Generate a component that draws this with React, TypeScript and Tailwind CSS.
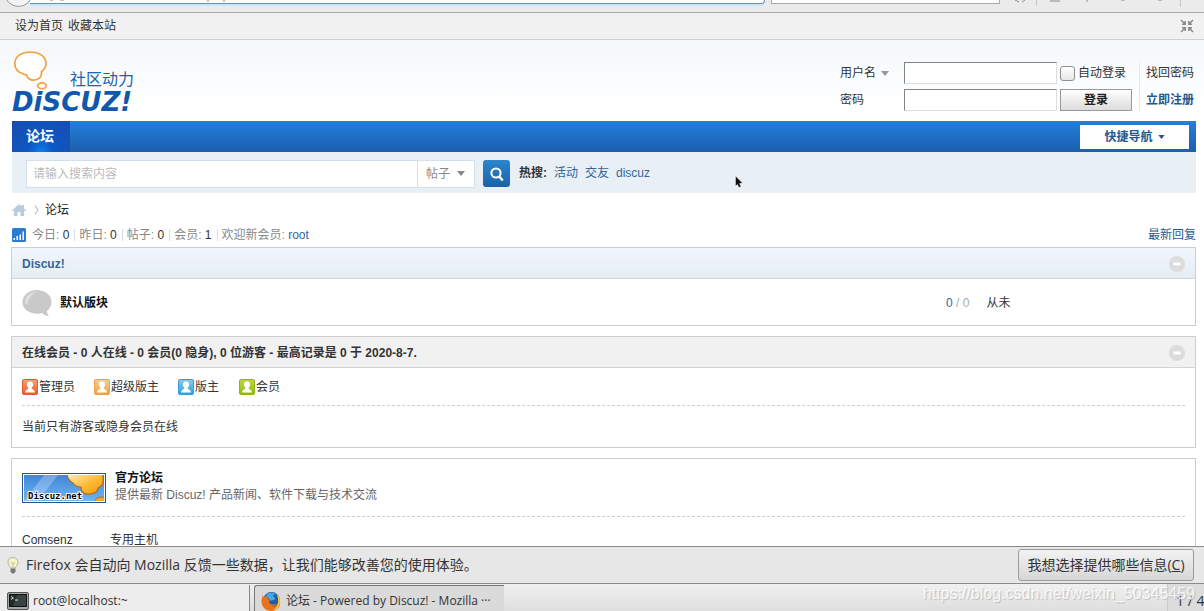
import type { ReactNode } from 'react';

const userGroups = [
  { name: '管理员', from: '#f9a27a', to: '#e9592b', width: 'w-[72px]' },
  { name: '超级版主', from: '#fbcf8c', to: '#ef9f45', width: 'w-[84px]' },
  { name: '版主', from: '#7fd0f5', to: '#2f9fe0', width: 'w-[61px]' },
  { name: '会员', from: '#bfdc35', to: '#8fb80f', width: 'w-[61px]' },
];

const stats = [
  { label: '今日', value: 0 },
  { label: '昨日', value: 0 },
  { label: '帖子', value: 0 },
  { label: '会员', value: 1 },
];

const hotWords = ['活动', '交友', 'discuz'];

function Caret({ className }: { className: string }) {
  return (
    <svg viewBox="0 0 8 5" className={className} aria-hidden="true">
      <path d="M0 0h8L4 5z" fill="currentColor" />
    </svg>
  );
}

function CollapseButton() {
  return (
    <button type="button" aria-label="收起/展开" className="size-4">
      <svg viewBox="0 0 16 16" className="size-4">
        <circle cx="8" cy="8" r="8" fill="#dcdcdc" />
        <rect x="4.5" y="6.5" width="7" height="3" rx="0.5" fill="#fff" />
      </svg>
    </button>
  );
}

function UserIcon({ id, from, to }: { id: string; from: string; to: string }) {
  return (
    <svg viewBox="0 0 16 16" className="size-4 shrink-0" aria-hidden="true">
      <defs>
        <linearGradient id={id} x1="0" y1="0" x2="0" y2="1">
          <stop offset="0" stopColor={from} />
          <stop offset="1" stopColor={to} />
        </linearGradient>
      </defs>
      <rect x="0.5" y="0.5" width="15" height="15" rx="1.5" fill={`url(#${id})`} stroke={to} />
      <path
        d="M8 2.6c2.2 0 3.200 1.300 3.100 3.200-.1 1.300-.7 2.200-1.400 2.900v1.200c1.400.4 3.100.8 3.300 3.600H3c.2-2.800 1.900-3.200 3.300-3.600V8.700C5.600 8 5 7.100 4.900 5.800 4.800 3.900 5.800 2.600 8 2.600z"
        fill="#fff"
      />
    </svg>
  );
}

function Logo() {
  return (
    <svg viewBox="0 0 130 66" className="h-[66px] w-[130px]" role="img" aria-label="Discuz! 社区动力">
      <g fill="#fff" stroke="#f0a23c" strokeWidth="1.7">
        <path d="M12.500 24.500C6 22.500 2.500 18.500 2.800 13 3.200 6 10 2 18 2c9 0 16 4.500 16 11.500 0 3.500-1.800 6-4.500 8 .8 5-2.800 8.700-8 8.700-3 0-6.500-2-7-5.500-.6-.2-1.300 0-2-.2z" />
        <ellipse cx="30" cy="35.800" rx="4.200" ry="2.900" />
      </g>
      <text x="58" y="35" fontSize="16" fill="#1c62b0" fontFamily="'Noto Sans CJK SC', sans-serif">社区动力</text>
      <text x="0" y="61" fontSize="26" fontWeight="700" fontStyle="italic" fill="#0f58ac" fontFamily="'DejaVu Sans', sans-serif">DiSCUZ!</text>
    </svg>
  );
}

function DiscuzBanner() {
  return (
    <svg viewBox="0 0 84 30" className="h-[30px] w-[84px] shrink-0" role="img" aria-label="Discuz.net">
      <defs>
        <linearGradient id="banner" x1="0" y1="0" x2="0" y2="1">
          <stop offset="0" stopColor="#3f86d8" />
          <stop offset="1" stopColor="#6db4f2" />
        </linearGradient>
        <linearGradient id="cloud" x1="0" y1="0" x2="1" y2="1">
          <stop offset="0" stopColor="#fff0c0" />
          <stop offset="0.6" stopColor="#fdb62c" />
          <stop offset="1" stopColor="#f59a10" />
        </linearGradient>
        <clipPath id="bannerClip"><rect x="2" y="2" width="80" height="26" /></clipPath>
      </defs>
      <rect width="84" height="30" fill="#27548c" />
      <rect x="1" y="1" width="82" height="28" fill="#fff" />
      <g clipPath="url(#bannerClip)">
        <rect x="2" y="2" width="80" height="26" fill="url(#banner)" />
        <path d="M22 2h14L16 28H2z" fill="#fff" opacity="0.25" />
        <path d="M45 0c0 4 2 8 6 10 2 3 5 4 8 4 0 5 4 8 9 7 5-.5 8-3 8-6 3-1 5-4 5-6V0z" fill="url(#cloud)" stroke="#b86a14" strokeWidth="1.2" />
        <ellipse cx="79" cy="27.500" rx="5.500" ry="3.500" fill="#fba620" stroke="#b86a14" />
      </g>
      <text x="6" y="26" fontSize="9" fontWeight="700" fontFamily="'DejaVu Sans Mono', monospace" fill="#000" stroke="#fff" strokeWidth="2" paintOrder="stroke">Discuz.net</text>
    </svg>
  );
}

// 浏览器地址栏的底边
function BrowserChrome() {
  return (
    <div className="relative flex h-[13px] shrink-0 items-start overflow-hidden border-b border-[#a9a9a9] bg-[#ebebeb] pl-[30px]">
      <div className="h-1 w-[735px] rounded-br-sm border-r border-b border-[#6a93bb] bg-white shadow-[0_2px_1px_#cbe5f8]" />
      <div className="ml-[6px] h-1 w-[229px] border-x border-b border-[#a9a9a9] bg-white" />
      <div className="absolute -top-[22px] left-1 size-[29px] rounded-full border border-[#999] bg-[#f4f4f4]" />
      <svg viewBox="0 0 1204 8" className="absolute top-0 left-0 h-2 w-[1204px]" aria-hidden="true">
        <path d="M50 0h3M60 0h4M208 0v2M224 0v2M1015 0l4 2M1025 0l-3 2M1050 1h10M1087 0v2M1121 0h4M1158 0h4" stroke="#8a8a8a" fill="none" />
        <path d="M1036.500 0v6M1180.500 0v7" stroke="#c4c4c4" />
      </svg>
    </div>
  );
}

function TopBar() {
  return (
    <div className="flex h-[27px] shrink-0 items-center gap-[5px] border-b border-[#cfcfcf] bg-[#f1f1f1] pr-[9px] pl-[15px]">
      <a href="#">设为首页</a>
      <a href="#">收藏本站</a>
      <button type="button" aria-label="切换到窄版" className="ml-auto size-4">
        <svg viewBox="0 0 16 16" className="size-4" fill="none" stroke="#8b8b8b" strokeWidth="1.5">
          <path d="M2 2l4 4M6.200 3v3.200H3M14 2l-4 4M9.800 3v3.200H13M2 14l4-4M6.200 13V9.800H3M14 14l-4-4M9.800 13V9.800H13" />
        </svg>
      </button>
    </div>
  );
}

function LoginForm() {
  const field = 'h-[22px] w-[153px] border border-t-[#848484] border-l-[#848484] border-r-[#ddd] border-b-[#ddd] bg-white px-1';
  return (
    <form className="mt-[22px] flex items-start pr-[2px]">
      <div className="grid grid-cols-[64px_153px_76px] items-center gap-y-[5px]">
        <div className="relative flex items-center">
          <select aria-label="登录方式" className="w-[52px] appearance-none bg-transparent outline-none">
            <option>用户名</option>
            <option>UID</option>
          </select>
          <Caret className="pointer-events-none absolute left-[41px] h-[5px] w-2 text-[#999]" />
        </div>
        <input type="text" aria-label="用户名" className={field} />
        <label className="flex items-center gap-[3px] pl-[3px] whitespace-nowrap">
          <input
            type="checkbox"
            className="size-[15px] shrink-0 appearance-none rounded-[3px] border border-[#8f8f8f] bg-linear-to-b from-white to-[#e6e6e6]"
          />
          自动登录
        </label>
        <label htmlFor="password">密码</label>
        <input id="password" type="password" className={field} />
        <button
          type="submit"
          className="ml-[3px] h-[22px] w-[72px] border border-[#999] bg-linear-to-b from-white to-[#dcdcdc] font-bold text-[#222]"
        >
          登录
        </button>
      </div>
      <div className="ml-[6px] flex flex-col gap-[9px] border-l border-[#e8e8e8] py-[2px] pl-[6px] whitespace-nowrap">
        <a href="#">找回密码</a>
        <a href="#" className="font-bold text-[#24598f]">立即注册</a>
      </div>
    </form>
  );
}

function SearchBar() {
  return (
    <form className="flex h-[41px] items-center bg-[#e8eff5] pt-[2px] pl-[14px]">
      <div className="flex h-7 border border-[#d3e1ec] bg-white">
        <input
          type="text"
          aria-label="搜索内容"
          placeholder="请输入搜索内容"
          className="w-[391px] border-r border-[#ddd] px-[6px] outline-none placeholder:text-[#bbb]"
        />
        <div className="relative flex items-center">
          <select aria-label="搜索类型" className="h-full w-[56px] appearance-none bg-transparent pl-2 text-[#888] outline-none">
            <option>帖子</option>
            <option>用户</option>
          </select>
          <Caret className="pointer-events-none absolute right-[9px] h-[5px] w-2 text-[#888]" />
        </div>
      </div>
      <button type="submit" aria-label="搜索" className="ml-2 flex size-[27px] items-center justify-center rounded-[3px] bg-linear-to-b from-[#2b86cb] to-[#1a62a8]">
        <svg viewBox="0 0 16 16" className="size-4" fill="none" stroke="#fff">
          <circle cx="7" cy="7" r="4.600" strokeWidth="2" />
          <path d="M10.200 10.500l3.600 4" strokeWidth="2.600" />
        </svg>
      </button>
      <div className="ml-[9px] flex gap-[7px] pb-[2px] text-[#336699]">
        <strong className="text-[#333]">热搜:</strong>
        {hotWords.map(word => (
          <a key={word} href="#">{word}</a>
        ))}
      </div>
    </form>
  );
}

function Breadcrumb() {
  return (
    <nav className="flex h-[29px] items-center pt-[5px]">
      <a href="#" aria-label="首页">
        <svg viewBox="0 0 14 12" className="h-3 w-[14px]" fill="#b9cddd">
          <path d="M7 0l2.500 2.300V1H12v3.600l2 2V7h-2v5H8.500V8h-3v4H2V7H0v-.4z" />
        </svg>
      </a>
      <svg viewBox="0 0 5 10" className="mr-[6px] ml-2 h-[10px] w-[5px]" fill="none" stroke="#aaa">
        <path d="M1 0.500l3 4.500-3 4.500" />
      </svg>
      <a href="#" className="text-[#222]">论坛</a>
    </nav>
  );
}

function StatsLine() {
  return (
    <div className="flex h-[25px] items-center text-[#888]">
      <svg viewBox="0 0 14 14" className="mr-[6px] size-[14px]" aria-hidden="true">
        <rect width="14" height="14" rx="1.5" fill="#2a7cd0" />
        <path d="M1.500 10h1.500v2H1.500zM4.500 8h1.500v4H4.500zM7.500 6.500H9V12H7.500zM10.500 3.500H12V12h-1.500z" fill="#fff" />
      </svg>
      {stats.map(item => (
        <span key={item.label} className="mr-1 border-r border-[#ddd] pr-[5px] leading-3">
          {item.label}: <span className="text-[#333]">{item.value}</span>
        </span>
      ))}
      <span>欢迎新会员: <a href="#" className="text-[#336699]">root</a></span>
      <a href="#" className="ml-auto text-[#24598f]">最新回复</a>
    </div>
  );
}

function PanelHeader({ children, className }: { children: ReactNode; className: string }) {
  return (
    <div className={`flex h-[31px] items-center justify-between border-b border-[#cdd4da] px-[10px] pt-[2px] ${className}`}>
      <h2 className="font-bold">{children}</h2>
      <CollapseButton />
    </div>
  );
}

function ForumPage() {
  return (
    <main className="min-h-0 flex-1 overflow-hidden bg-linear-to-b from-[#f4f8fb] to-[#ffffff] to-[70px]">
      <div className="mr-2 ml-3">
        <header className="flex h-[81px] justify-between">
          <div className="pt-[10px]"><Logo /></div>
          <LoginForm />
        </header>
        <nav className="flex h-[31px] items-center justify-between bg-linear-to-b from-[#2280dc] to-[#1c5fae] pr-[7px]">
          <a href="#" className="flex h-full w-[58px] items-center justify-center bg-[radial-gradient(ellipse_at_bottom,#0c80ee,#0d58c4_30%,#1a4bb0)] pr-[2px] pb-[2px] text-[14px] font-bold text-white">论坛</a>
          <button type="button" className="flex h-6 w-[109px] items-center justify-center gap-[5px] bg-white font-bold text-[#24598f]">
            快捷导航
            <Caret className="h-1 w-[7px]" />
          </button>
        </nav>
        <SearchBar />
        <Breadcrumb />
        <StatsLine />
      </div>

      <div className="mr-2 ml-[11px] flex flex-col gap-[10px]">
        <section className="border border-[#cdcdcd] bg-white">
          <PanelHeader className="bg-linear-to-b from-[#f1f6fc] to-[#e5edf3] text-[#336699]">Discuz!</PanelHeader>
          <div className="flex h-[46px] items-center pt-[2px] pl-[10px]">
            <svg viewBox="0 0 31 29" className="h-[29px] w-[31px] shrink-0" aria-hidden="true">
              <path d="M15 1c8 0 14.500 5 14.500 12 0 4-1.800 7-4.500 9 0 2 .8 3.500 2 5-3 0-5-1-7-3-1.500.5-3 .7-5 .7C7 24.700.500 20 .500 13S7 1 15 1z" fill="#c9c9c9" />
              <path d="M3 13C3 7 8 3 15 3c-4 1.500-8 5-9.500 12-.7 1-2.500 0-2.500-2z" fill="#dedede" />
            </svg>
            <h3 className="ml-[7px] font-bold text-[#111]">默认版块</h3>
            <div className="ml-auto flex w-[249px] gap-[17px]">
              <span className="text-[#aaa]"><span className="text-[#336699]">0</span> / 0</span>
              <span>从未</span>
            </div>
          </div>
        </section>

        <section className="border border-[#cdcdcd] bg-white">
          <PanelHeader className="bg-[#f1f1f1] text-[#333]">
            在线会员 - 0 人在线 - 0 会员(0 隐身), 0 位游客 - 最高记录是 0 于 2020-8-7.
          </PanelHeader>
          <div className="px-[10px]">
            <ul className="flex h-[38px] items-center border-b border-dashed border-[#cdcdcd] pt-px">
              {userGroups.map((group, i) => (
                <li key={group.name} className={`flex items-center gap-px whitespace-nowrap ${group.width}`}>
                  <UserIcon id={`group${i}`} from={group.from} to={group.to} />
                  {group.name}
                </li>
              ))}
            </ul>
            <p className="flex h-[41px] items-center">当前只有游客或隐身会员在线</p>
          </div>
        </section>

        <section className="border border-[#cdcdcd] bg-white px-[10px]">
          <div className="flex h-[58px] items-center gap-[9px] border-b border-dashed border-[#cdcdcd]">
            <DiscuzBanner />
            <div className="pb-[2px] leading-[17px]">
              <h3 className="font-bold text-[#111]">官方论坛</h3>
              <p className="text-[#666]">提供最新 Discuz! 产品新闻、软件下载与技术交流</p>
            </div>
          </div>
          <div className="flex h-[46px] items-center">
            <a href="#" className="w-[88px]">Comsenz</a>
            <a href="#">专用主机</a>
          </div>
        </section>
      </div>
    </main>
  );
}

function NoticeBar() {
  return (
    <div className="flex h-[38px] shrink-0 items-center border-y border-[#8a8a8a] bg-[#e7e7e7] pr-[10px] pl-[7px] text-[14px] text-[#333]">
      <svg viewBox="0 0 12 17" className="mr-[7px] h-[17px] w-3" aria-hidden="true">
        <path d="M6 .5c3 0 5 2 5 4.800C11 8 9 9 8.500 11h-5C3 9 1 8 1 5.300 1 2.500 3 .5 6 .5z" fill="#f5f3cf" stroke="#b5b5a0" />
        <path d="M4 5l2 2 2-2M6 7v4" stroke="#c4bf80" fill="none" />
        <path d="M3.500 11.500h5v3L7 16.500H5l-1.500-2z" fill="#777" />
      </svg>
      <p>Firefox 会自动向 Mozilla 反馈一些数据，让我们能够改善您的使用体验。</p>
      <button type="button" className="ml-auto h-8 w-[176px] rounded-[3px] border border-[#9b9b9b] bg-linear-to-b from-[#f3f3f3] to-[#d6d6d6] whitespace-nowrap">
        我想选择提供哪些信息(<u>C</u>)
      </button>
    </div>
  );
}

function Taskbar() {
  return (
    <footer className="relative flex h-[27px] shrink-0 items-end overflow-hidden bg-linear-to-b from-[#f0f0f0] to-[#dedede] text-[12px] text-[#333]">
      <button type="button" className="flex h-[26px] w-[250px] items-center gap-1 border-r border-[#888] bg-[#ededed] pt-[6px] pl-[7px]">
        <svg viewBox="0 0 22 18" className="h-[18px] w-[22px]" aria-hidden="true">
          <rect x="0.5" y="0.5" width="21" height="17" rx="1.5" fill="#a5a8a5" stroke="#555" />
          <rect x="2.5" y="2.5" width="17" height="12" fill="#1f2a2b" stroke="#111" />
          <path d="M4 4.500l2.500 1.500L4 7.500M8 8h3" stroke="#ddd" fill="none" />
          <path d="M10 3h9v11H6z" fill="#fff" opacity="0.12" />
        </svg>
        root@localhost:~
      </button>
      <button type="button" className="ml-1 flex h-[26px] w-[250px] items-center gap-[5px] rounded-tl-[3px] border-t border-l border-[#777] bg-[#dadada] pt-[5px] pl-[6px] whitespace-nowrap">
        <svg viewBox="0 0 20 20" className="size-5 shrink-0" aria-hidden="true">
          <circle cx="10.500" cy="9.500" r="8.500" fill="#1f5fa8" />
          <path d="M5 4c3-3 8-3 11 0-3-1-4 0-4 1 2 1 3 3 1 4-3 1-5 0-6-2z" fill="#4aa8e0" />
          <path d="M2 4c0 1 .5 2 1 2 1-1 3-1 4-.5C6 6.500 6 8 7.500 8.500c1.500 0 2 1 .5 2 0 3 4 4 7 2-1 3-4 4-6 3 4 2 9-2 8.500-8 1.500 2 2 4 1.300 6.500C17.500 18 14 20 10 20 4.500 20 .5 15.500.5 10.500.5 8 1 6 2 4z" fill="#e8731a" />
          <path d="M16 3c3 3 4 8 2 12-1.500 3-4 4-6 4 4-2 6-7 5-11z" fill="#fbc43c" />
        </svg>
        论坛 - Powered by Discuz! - Mozilla ···
      </button>
      <div className="ml-auto flex h-full w-[37px] items-center border-l border-[#ccc] bg-[#dcdcdc] pt-[6px] pl-2 text-[14px] whitespace-nowrap">1 / 4</div>
      <span className="absolute top-0 right-[9px] font-['Liberation_Sans'] text-[16px] leading-[19px] text-white/80 [text-shadow:1px_1px_1px_#bbb]">
        https://blog.csdn.net/weixin_50345459
      </span>
    </footer>
  );
}

export default function App() {
  return (
    <div className="relative flex h-screen flex-col overflow-hidden bg-white font-['Liberation_Sans','Noto_Sans_CJK_SC',sans-serif] text-[12px] leading-[18px] text-[#333] [&_a]:whitespace-nowrap">
      <BrowserChrome />
      <TopBar />
      <ForumPage />
      <div className="shrink-0 font-['Open_Sans','Noto_Sans_CJK_SC',sans-serif]">
        <NoticeBar />
        <Taskbar />
      </div>
      {/* 鼠标指针 */}
      <svg viewBox="0 0 8 12" className="pointer-events-none absolute top-[176px] left-[735px] h-3 w-2" aria-hidden="true">
        <path d="M0.500 0l7 7-3 .5 1.500 3-2 1-1.500-3-2 1.500z" fill="#111" stroke="#fff" strokeWidth="0.4" />
      </svg>
    </div>
  );
}
